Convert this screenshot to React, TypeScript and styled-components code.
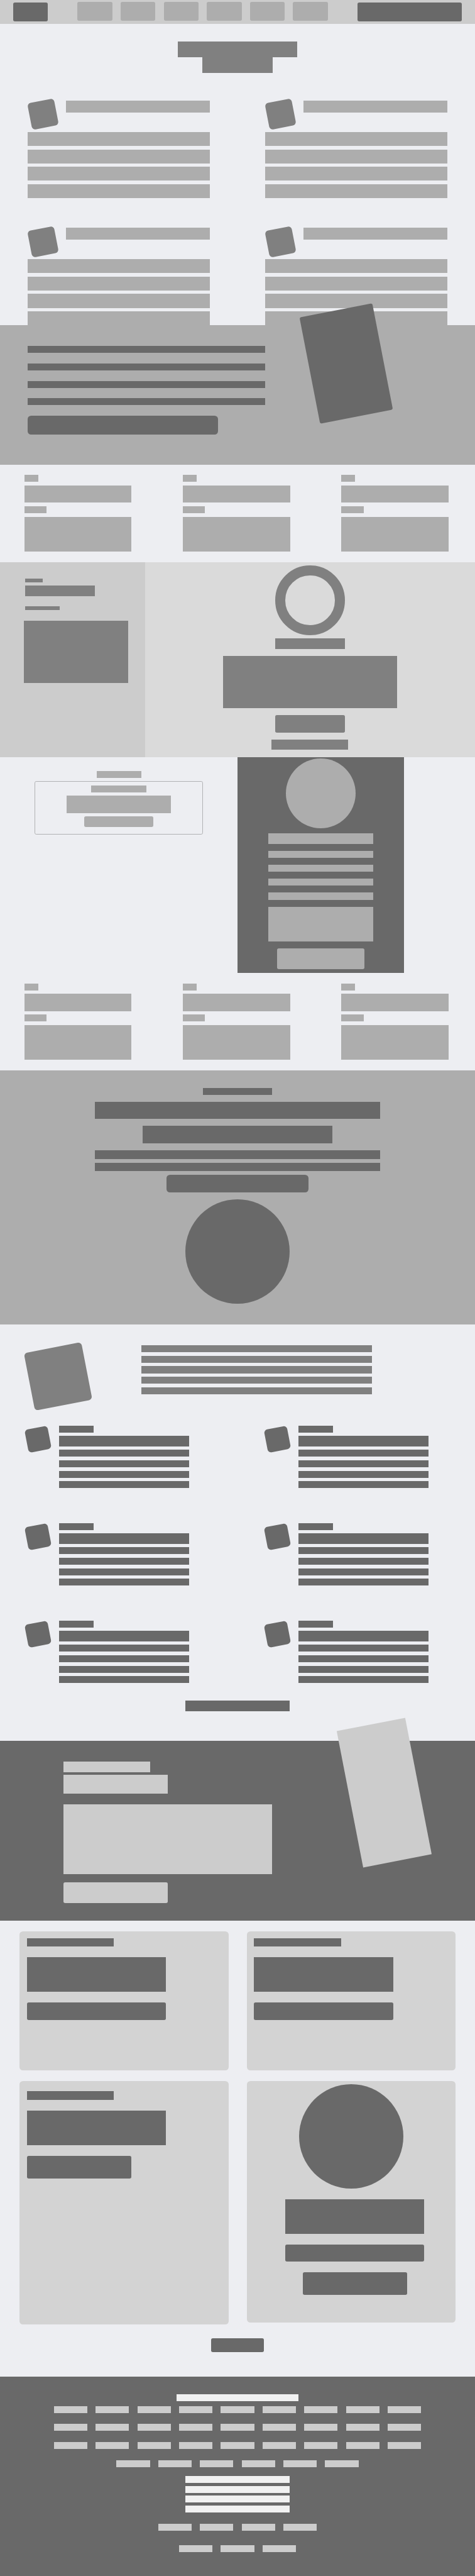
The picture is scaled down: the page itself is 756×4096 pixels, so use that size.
import React from "react";
import styled, { createGlobalStyle } from "styled-components";

/* The design is drawn on a 1366 x 7398 unit grid and scaled to a 4096px tall page. */
const u = (n: number) => `${(n * 4096) / 7398}px`;

const color = {
  page: "#edeef2",
  ink: "#696969",
  mid: "#808080",
  soft: "#adadad",
  line: "#b1b2b4",
  pale: "#cccccc",
  panel: "#dadada",
  card: "#d3d3d3",
  white: "#f1f1f1",
};

const GlobalStyle = createGlobalStyle`
  *, *::before, *::after { box-sizing: border-box; }
  html, body { margin: 0; padding: 0; background: ${color.page}; }
  body { font-family: "Liberation Sans", sans-serif; }
`;

const Page = styled.div`
  width: 756px;
  height: 4096px;
  overflow: hidden;
  display: flex;
  flex-direction: column;
  background: ${color.page};
`;

type BarProps = { $w: number; $h: number; $c?: string; $r?: number; $mt?: number };

const Bar = styled.div<BarProps>`
  flex: none;
  width: ${(p) => u(p.$w)};
  height: ${(p) => u(p.$h)};
  margin-top: ${(p) => u(p.$mt ?? 0)};
  border-radius: ${(p) => u(p.$r ?? 0)};
  background: ${(p) => p.$c ?? color.soft};
`;

const Disc = styled.div<{ $d: number; $c: string }>`
  flex: none;
  width: ${(p) => u(p.$d)};
  height: ${(p) => u(p.$d)};
  border-radius: 50%;
  background: ${(p) => p.$c};
`;

const Ring = styled.div`
  flex: none;
  width: ${u(200)};
  height: ${u(200)};
  border: ${u(30)} solid ${color.mid};
  border-radius: 50%;
`;

const Tile = styled.div<{ $s: number; $c: string }>`
  flex: none;
  width: ${(p) => u(p.$s)};
  height: ${(p) => u(p.$s)};
  border-radius: ${u(10)};
  background: ${(p) => p.$c};
  transform: rotate(-11deg);
`;

const Stack = styled.div<{ $gap?: number }>`
  display: flex;
  flex-direction: column;
  gap: ${(p) => u(p.$gap ?? 0)};
`;

/* Header */

const Header = styled.header`
  flex: none;
  display: flex;
  justify-content: space-between;
  height: ${u(69.2)};
  padding: ${u(7)} ${u(38.3)} 0;
  background: ${color.pale};
`;

const Nav = styled.nav`
  display: flex;
  gap: ${u(24)};
  margin-top: ${u(-2)};
`;

const Hero = styled.section`
  flex: none;
  display: flex;
  flex-direction: column;
  align-items: center;
  height: ${u(214.8)};
  padding-top: ${u(50)};
`;

/* Feature list */

const Features = styled.section`
  flex: none;
  display: grid;
  grid-template-columns: 1fr 1fr;
  grid-template-rows: ${u(365.2)} ${u(284.8)};
  height: ${u(650)};
`;

const Feature = styled.article`
  padding: ${u(4.8)} 0 0 ${u(80.1)};
`;

const FeatureHead = styled.div`
  display: flex;
  height: ${u(90.2)};
`;

const FeatureIcon = styled.div`
  width: ${u(109.8)};
  padding: ${u(0.8)} 0 0 ${u(4.8)};
`;

/* Call-out bands */

const Band = styled.section`
  flex: none;
  position: relative;
  height: ${u(400)};
  padding: ${u(60)} 0 0 ${u(80.1)};
  background: ${color.soft};
`;

const BandPicture = styled.div`
  position: absolute;
  left: ${u(889.5)};
  top: ${u(-45.3)};
  width: ${u(213.3)};
  height: ${u(310.6)};
  border-radius: ${u(5)};
  background: ${color.ink};
  transform: rotate(-11deg);
`;

const Columns = styled.section`
  flex: none;
  display: grid;
  grid-template-columns: repeat(3, ${u(455.5)});
  height: ${u(280)};
  padding: ${u(30)} 0 0 ${u(69.7)};
`;

/* Sidebar and profile */

const Split = styled.section`
  flex: none;
  display: flex;
  height: ${u(560)};
`;

const Sidebar = styled.aside`
  width: ${u(416.4)};
  padding: ${u(48)} 0 0 ${u(68)};
  background: ${color.pale};
`;

const SidebarText = styled.div`
  display: flex;
  flex-direction: column;
  height: ${u(120)};
  padding-left: ${u(4.3)};
`;

const Profile = styled.div`
  flex: 1;
  display: flex;
  flex-direction: column;
  align-items: center;
  padding-top: ${u(10)};
  background: ${color.panel};
`;

/* Offer and form */

const Booking = styled.section`
  flex: none;
  display: flex;
  height: ${u(620)};
`;

const Offer = styled.div`
  width: ${u(683)};
  display: flex;
  flex-direction: column;
  align-items: center;
  padding-top: ${u(40)};
`;

const OfferBox = styled.div`
  display: flex;
  flex-direction: column;
  align-items: center;
  gap: ${u(10)};
  width: ${u(482.6)};
  height: ${u(152)};
  margin-top: ${u(10)};
  padding-top: ${u(9.5)};
  border: 1px solid ${color.line};
  border-radius: ${u(5)};
`;

const FormPanel = styled.div`
  width: ${u(478.2)};
  display: flex;
  flex-direction: column;
  align-items: center;
  gap: ${u(20)};
  padding-top: ${u(5)};
  background: ${color.ink};
`;

const Statement = styled.section`
  flex: none;
  display: flex;
  flex-direction: column;
  align-items: center;
  height: ${u(730)};
  padding-top: ${u(50)};
  background: ${color.soft};
`;

/* Services */

const Intro = styled.section`
  flex: none;
  display: flex;
  height: ${u(290)};
  padding: ${u(60)} 0 0 ${u(83.3)};
`;

const IntroPicture = styled.div`
  width: ${u(322.7)};
  padding-top: ${u(5.4)};
`;

const Services = styled.section`
  flex: none;
  display: grid;
  grid-template-columns: ${u(688.1)} 1fr;
  grid-auto-rows: ${u(280)};
  padding-left: ${u(76.5)};
`;

const Service = styled.article`
  display: flex;
`;

const ServiceIcon = styled.div`
  width: ${u(93.4)};
  padding-top: ${u(6.5)};
`;

const More = styled.div<{ $h: number; $pt: number }>`
  flex: none;
  display: flex;
  justify-content: center;
  align-items: flex-start;
  height: ${(p) => u(p.$h)};
  padding-top: ${(p) => u(p.$pt)};
`;

const Contact = styled.section`
  flex: none;
  position: relative;
  height: ${u(516.8)};
  padding: ${u(60)} 0 0 ${u(182)};
  background: ${color.ink};
`;

const ContactPicture = styled.div`
  position: absolute;
  left: ${u(1005.1)};
  top: ${u(-50.2)};
  width: ${u(200)};
  height: ${u(400)};
  background: ${color.pale};
  transform: rotate(-11deg);
`;

/* Cards */

const Cards = styled.section`
  flex: none;
  display: grid;
  grid-template-columns: ${u(600)} ${u(600)};
  grid-template-rows: ${u(400)} ${u(700)};
  gap: ${u(30)} ${u(53.4)};
  height: ${u(1160)};
  padding: ${u(30)} 0 0 ${u(56.6)};
`;

const Card = styled.article<{ $h: number; $pt: number }>`
  display: flex;
  flex-direction: column;
  gap: ${u(30)};
  height: ${(p) => u(p.$h)};
  padding: ${(p) => u(p.$pt)} 0 0 ${u(20.2)};
  border-radius: ${u(10)};
  background: ${color.card};
`;

const MediaCard = styled(Card)`
  align-items: center;
  padding-left: 0;
`;

const MediaText = styled.div`
  display: flex;
  flex-direction: column;
  align-items: center;
  gap: ${u(30)};
  padding-left: ${u(20)};
`;

/* Footer */

const Footer = styled.footer`
  flex: 1;
  display: flex;
  flex-direction: column;
  align-items: center;
  padding-top: ${u(50)};
  background: ${color.ink};
`;

const LinkRow = styled.div<{ $mt: number }>`
  display: flex;
  gap: ${u(24)};
  margin-top: ${(p) => u(p.$mt)};
`;

const range = (n: number) => Array.from({ length: n }, (_, i) => i);

const FeatureItem = () => (
  <Feature>
    <FeatureHead>
      <FeatureIcon>
        <Tile $s={78.4} $c={color.mid} />
      </FeatureIcon>
      <Bar $w={413} $h={35} />
    </FeatureHead>
    <Stack $gap={10}>
      {range(4).map((i) => (
        <Bar key={i} $w={522.7} $h={40} />
      ))}
    </Stack>
  </Feature>
);

const ColumnBlock = () => (
  <Columns>
    {range(3).map((i) => (
      <Stack key={i} $gap={10}>
        <Bar $w={40} $h={20} />
        <Bar $w={308.4} $h={50} />
        <Bar $w={64.4} $h={20} />
        <Bar $w={308.4} $h={100} />
      </Stack>
    ))}
  </Columns>
);

const ServiceItem = () => (
  <Service>
    <ServiceIcon>
      <Tile $s={67} $c={color.ink} />
    </ServiceIcon>
    <Stack $gap={10}>
      <Bar $w={100} $h={20} $c={color.ink} />
      <Bar $w={373.7} $h={30} $c={color.ink} />
      {range(4).map((i) => (
        <Bar key={i} $w={373.7} $h={20} $c={color.ink} />
      ))}
    </Stack>
  </Service>
);

const Links = ({ count, mt }: { count: number; mt: number }) => (
  <LinkRow $mt={mt}>
    {range(count).map((i) => (
      <Bar key={i} $w={96} $h={20} $c={color.pale} />
    ))}
  </LinkRow>
);

export default function App() {
  return (
    <>
      <GlobalStyle />
      <Page>
        <Header>
          <Bar $w={99.6} $h={55} $r={5} $c={color.ink} />
          <Nav>
            {range(6).map((i) => (
              <Bar key={i} $w={100} $h={55} $r={5} />
            ))}
          </Nav>
          <Bar $w={300} $h={55} $r={5} $c={color.ink} />
        </Header>

        <Hero>
          <Bar $w={341.5} $h={44.8} $c={color.mid} />
          <Bar $w={204} $h={44.8} $c={color.mid} />
        </Hero>

        <Features>
          {range(4).map((i) => (
            <FeatureItem key={i} />
          ))}
        </Features>

        <Band>
          <Stack $gap={30}>
            {range(4).map((i) => (
              <Bar key={i} $w={683} $h={20} $c={color.ink} />
            ))}
            <Bar $w={546.4} $h={55} $r={10} $c={color.ink} />
          </Stack>
          <BandPicture />
        </Band>

        <ColumnBlock />

        <Split>
          <Sidebar>
            <SidebarText>
              <Bar $w={50} $h={10} $c={color.mid} />
              <Bar $w={200} $h={30} $mt={10} $c={color.mid} />
              <Bar $w={100} $h={10} $mt={30} $c={color.mid} />
            </SidebarText>
            <Bar $w={300} $h={180} $c={color.mid} />
          </Sidebar>
          <Profile>
            <Ring />
            <Bar $w={200} $h={30} $mt={10} $c={color.mid} />
            <Bar $w={500} $h={150} $mt={20} $c={color.mid} />
            <Bar $w={200} $h={50} $mt={20} $r={5} $c={color.mid} />
            <Bar $w={220} $h={30} $mt={20} $c={color.mid} />
          </Profile>
        </Split>

        <Booking>
          <Offer>
            <Bar $w={128} $h={20} />
            <OfferBox>
              <Bar $w={160} $h={20} />
              <Bar $w={300} $h={50} />
              <Bar $w={200} $h={30} $r={5} />
            </OfferBox>
          </Offer>
          <FormPanel>
            <Disc $d={200} $c={color.soft} />
            <Bar $w={300} $h={30} $mt={-5} />
            {range(4).map((i) => (
              <Bar key={i} $w={300} $h={20} />
            ))}
            <Bar $w={300} $h={100} />
            <Bar $w={250} $h={60} $r={5} />
          </FormPanel>
        </Booking>

        <ColumnBlock />

        <Statement>
          <Bar $w={200} $h={20} $c={color.ink} />
          <Bar $w={820} $h={50} $mt={20} $c={color.ink} />
          <Bar $w={546} $h={50} $mt={20} $c={color.ink} />
          <Bar $w={820} $h={25} $mt={20} $c={color.ink} />
          <Bar $w={820} $h={25} $mt={10} $c={color.ink} />
          <Bar $w={409.8} $h={50} $mt={10} $r={10} $c={color.ink} />
          <More $h={320} $pt={20}>
            <Disc $d={300} $c={color.ink} />
          </More>
        </Statement>

        <Intro>
          <IntroPicture>
            <Tile $s={168.8} $c={color.mid} />
          </IntroPicture>
          <Stack $gap={10}>
            {range(5).map((i) => (
              <Bar key={i} $w={663} $h={20} $c={color.mid} />
            ))}
          </Stack>
        </Intro>

        <Services>
          {range(6).map((i) => (
            <ServiceItem key={i} />
          ))}
        </Services>
        {/* The grid's last row already leaves 100 units of free space. */}
        <More $h={65.2} $pt={0}>
          <Bar $w={300} $h={30} $mt={-50} $c={color.ink} />
        </More>

        <Contact>
          <Bar $w={250} $h={30} $c={color.pale} />
          <Bar $w={300} $h={55} $mt={8} $c={color.pale} />
          <Bar $w={600} $h={200} $mt={30} $c={color.pale} />
          <Bar $w={300} $h={60} $mt={24} $r={5} $c={color.pale} />
          <ContactPicture />
        </Contact>

        <Cards>
          {range(2).map((i) => (
            <Card key={i} $h={400} $pt={20}>
              <Bar $w={250} $h={25} $c={color.ink} />
              <Bar $w={400} $h={100} $c={color.ink} />
              <Bar $w={400} $h={50} $r={5} $c={color.ink} />
            </Card>
          ))}
          <Card $h={700} $pt={30}>
            <Bar $w={250} $h={25} $c={color.ink} />
            <Bar $w={400} $h={100} $c={color.ink} />
            <Bar $w={300} $h={65} $r={5} $c={color.ink} />
          </Card>
          <MediaCard $h={695} $pt={10}>
            <Disc $d={300} $c={color.ink} />
            <MediaText>
              <Bar $w={400} $h={100} $c={color.ink} />
              <Bar $w={400} $h={50} $r={5} $c={color.ink} />
              <Bar $w={300} $h={65} $r={5} $c={color.ink} />
            </MediaText>
          </MediaCard>
        </Cards>
        <More $h={150} $pt={40}>
          <Bar $w={150} $h={40} $r={5} $c={color.ink} />
        </More>

        <Footer>
          <Bar $w={350} $h={20} $c={color.white} />
          <Links count={9} mt={14} />
          <Links count={9} mt={32} />
          <Links count={9} mt={32} />
          <Links count={6} mt={32} />
          <Bar $w={300} $h={20} $mt={26} $c={color.white} />
          {range(3).map((i) => (
            <Bar key={i} $w={300} $h={20} $mt={8} $c={color.white} />
          ))}
          <Links count={4} mt={32} />
          <Links count={3} mt={42} />
        </Footer>
      </Page>
    </>
  );
}
